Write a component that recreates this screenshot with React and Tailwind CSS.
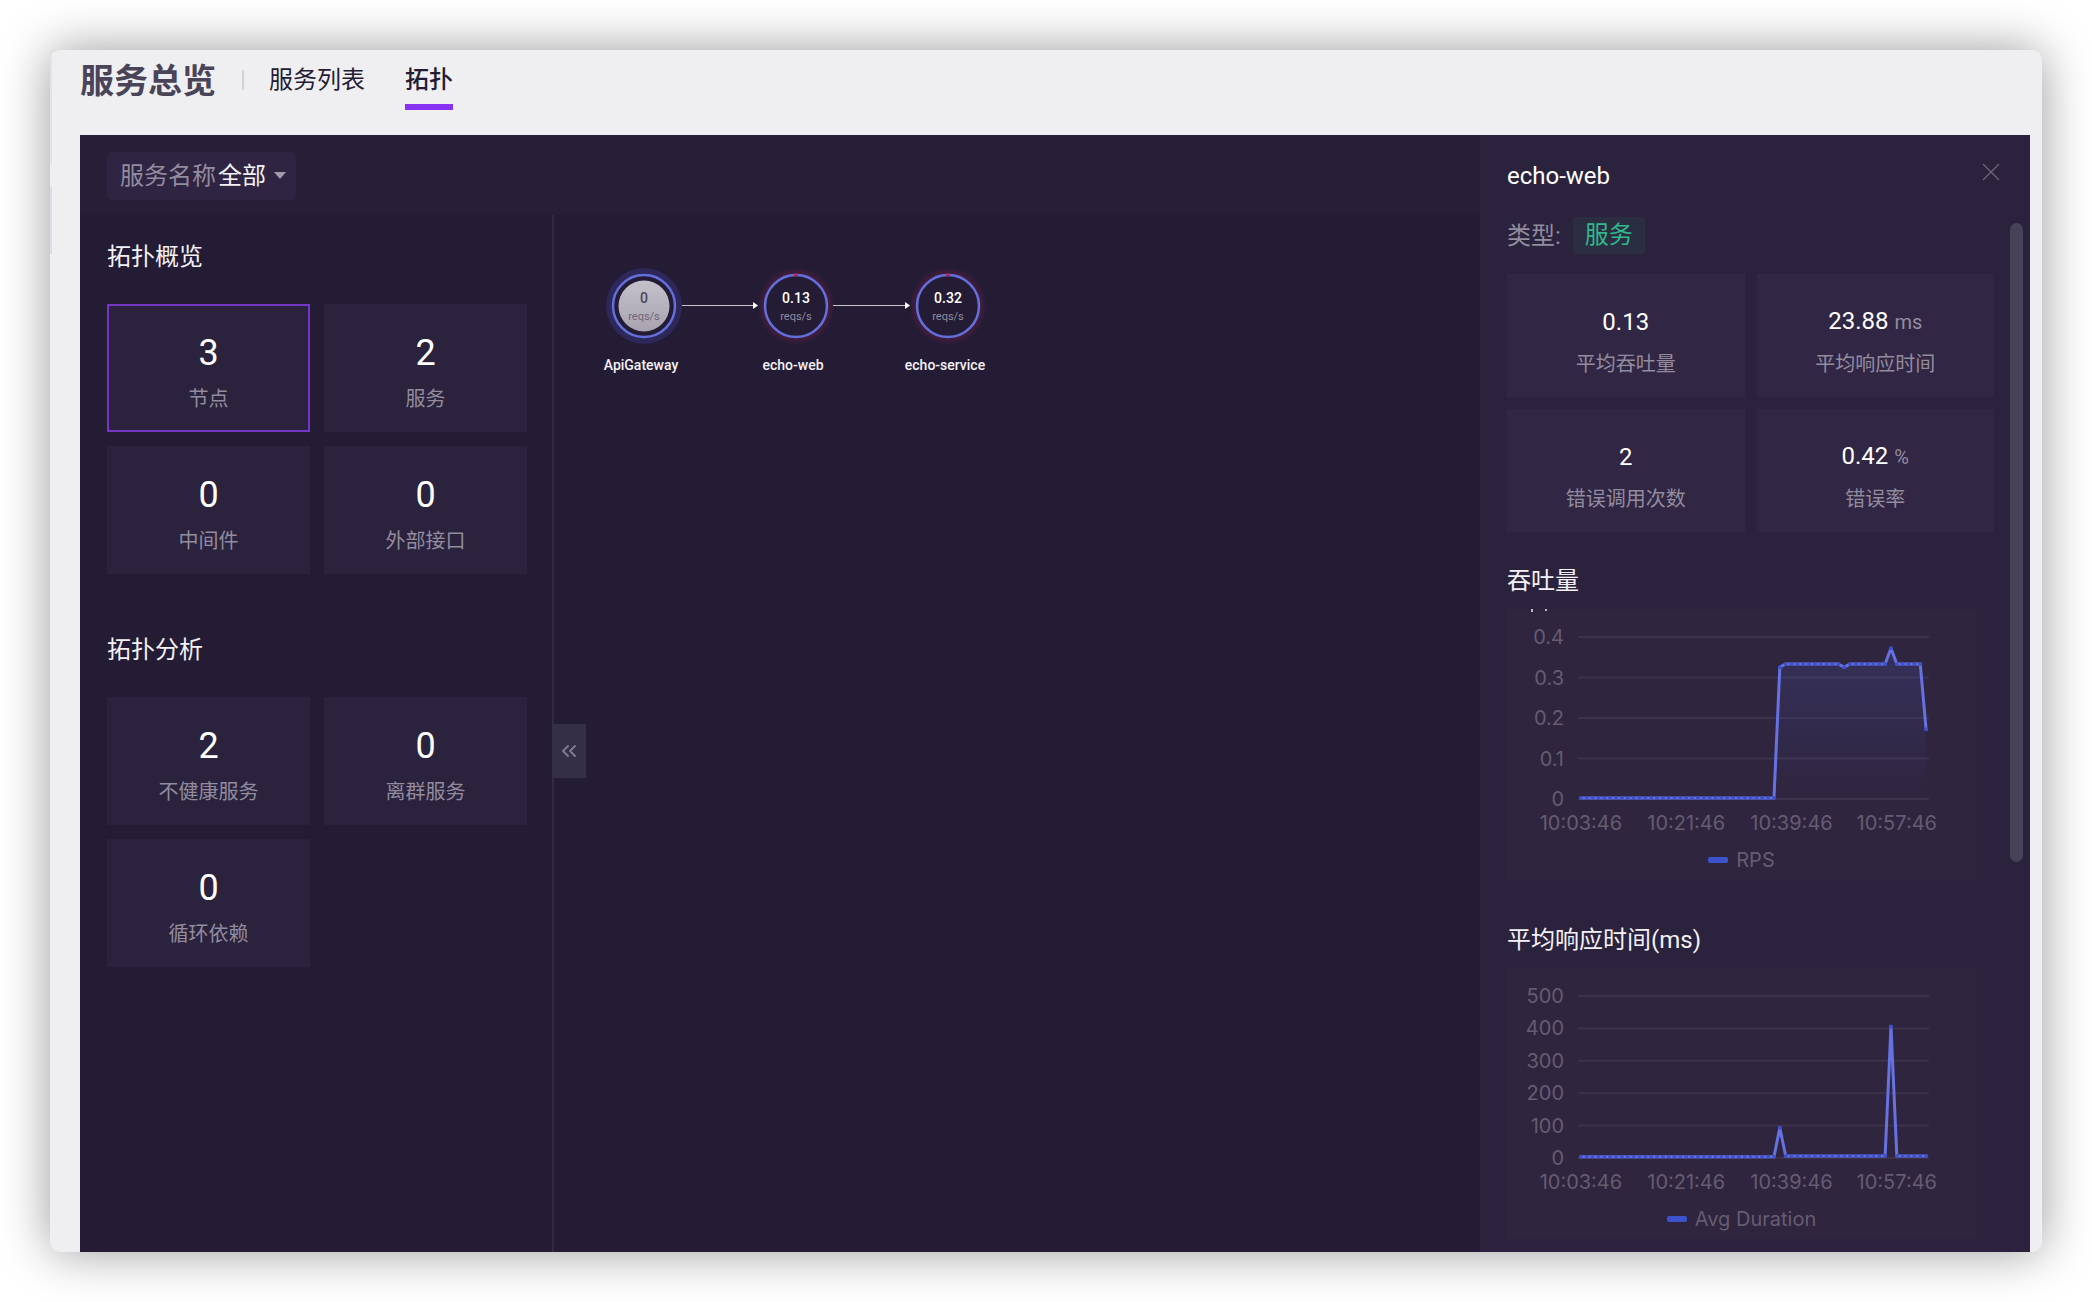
import { ChevronsLeft, X } from 'lucide-react'
import clsx from 'clsx'

const overview = [
  { value: 3, label: '节点', active: true },
  { value: 2, label: '服务' },
  { value: 0, label: '中间件' },
  { value: 0, label: '外部接口' },
]

const analysis = [
  { value: 2, label: '不健康服务' },
  { value: 0, label: '离群服务' },
  { value: 0, label: '循环依赖' },
]

const metrics = [
  { value: '0.13', label: '平均吞吐量' },
  { value: '23.88', unit: 'ms', label: '平均响应时间' },
  { value: '2', label: '错误调用次数' },
  { value: '0.42', unit: '%', label: '错误率' },
]

const timeLabels = ['10:03:46', '10:21:46', '10:39:46', '10:57:46']

// One sample per minute, 60 samples
const rps = Array.from({ length: 60 }, (_, i) => {
  if (i < 34) return 0
  if (i === 34) return 0.323
  if (i === 45) return 0.323
  if (i === 53) return 0.37
  if (i === 59) return 0.17
  return 0.331
})

const duration = Array.from({ length: 60 }, (_, i) => {
  if (i === 34) return 90
  if (i === 53) return 403
  return i < 34 ? 1 : 3
})

function StatGroup({ title, items }) {
  return (
    <section>
      <h2 className="text-2xl leading-8 text-[#f3f1f6]">{title}</h2>
      <div className="mt-[31px] grid grid-cols-2 gap-[14px]">
        {items.map((item) => (
          <button
            key={item.label}
            type="button"
            className={clsx(
              'flex h-32 flex-col items-center justify-center gap-1 border-2 bg-[#2b223d] pt-[14px]',
              item.active ? 'border-[#7434c4]' : 'border-[#2b223d]'
            )}
          >
            <span className="text-4xl leading-[44px] text-white">{item.value}</span>
            <span className="text-xl leading-10 text-[#928c9f]">{item.label}</span>
          </button>
        ))}
      </div>
    </section>
  )
}

function MetricCard({ value, unit, label }) {
  return (
    <div className="flex h-[123px] flex-col items-center justify-center gap-1 bg-[#312643] pt-4">
      <p className="text-2xl leading-9 text-white">
        {value}
        {unit && <span className="ml-[6px] text-xl leading-9 text-[#928c9f]">{unit}</span>}
      </p>
      <p className="text-xl leading-10 text-[#928c9f]">{label}</p>
    </div>
  )
}

function ChartCard({ title, clippedName, ticks, data, legend, filled }) {
  const left = 71
  const right = 422
  const top = 28
  const bottom = 190
  const max = ticks[0]
  const step = (right - left) / data.length
  const px = (i) => left + step * (i + 0.5)
  const py = (v) => bottom - 1 - (v / max) * (bottom - top)
  const points = data.map((v, i) => `${px(i)},${py(v)}`).join(' ')

  return (
    <section>
      <h3 className="text-2xl leading-8 text-[#f3f1f6]">{title}</h3>
      <div className="mt-3 mr-[18px] overflow-hidden bg-[#2f253f]">
        <svg viewBox="0 0 469 231" className="block w-full font-['Inter','Noto_Sans_CJK_SC',sans-serif] text-[20px]">
          <defs>
            <linearGradient id="area" x1="0" y1="0" x2="0" y2="1">
              <stop offset="0" stopColor="#4a55b0" stopOpacity="0.24" />
              <stop offset="1" stopColor="#4a55b0" stopOpacity="0" />
            </linearGradient>
          </defs>
          {/* Tails of the axis name, which runs out over the top edge */}
          {clippedName && <path d="M24 0h2v3h-2zM38 0h2v2h-2z" fill="#bdb8c8" />}
          {ticks.map((tick, i) => {
            const y = top + ((bottom - top) * i) / (ticks.length - 1)
            return (
              <g key={tick}>
                <line x1={left} x2={right} y1={y} y2={y} stroke="#3c334b" strokeWidth="2" />
                <text x="57" y={y + 7} textAnchor="end" fill="#645d71">
                  {tick}
                </text>
              </g>
            )
          })}
          {timeLabels.map((label, i) => (
            <text key={label} x={px(i * 18)} y="221" textAnchor="middle" fill="#645d71">
              {label}
            </text>
          ))}
          {filled && (
            <polygon points={`${px(0)},${bottom} ${points} ${px(59)},${bottom}`} fill="url(#area)" />
          )}
          <polyline
            points={points}
            fill="none"
            stroke="#6672e2"
            strokeWidth="3"
            strokeLinejoin="round"
            strokeLinecap="round"
          />
          {data.map((v, i) => (
            <circle key={i} cx={px(i)} cy={py(v)} r="2" fill="#3f51c8" />
          ))}
        </svg>
        <div className="flex h-10 items-center justify-center gap-2 font-['Inter','Noto_Sans_CJK_SC',sans-serif] text-[20px] text-[#645d71]">
          <span className="h-[6px] w-5 rounded-xs bg-[#3c53cc]" />
          {legend}
        </div>
      </div>
    </section>
  )
}

const nodes = [
  { x: 90, name: 'ApiGateway', rate: '0', selected: true },
  { x: 242, name: 'echo-web', rate: '0.13' },
  { x: 394, name: 'echo-service', rate: '0.32' },
]

function Topology() {
  return (
    <svg
      width="480"
      height="190"
      className="block font-['Roboto','Noto_Sans_CJK_SC',sans-serif]"
      role="img"
      aria-label="拓扑"
    >
      <defs>
        <linearGradient id="disc" x1="0" y1="0" x2="0" y2="1">
          <stop offset="0" stopColor="#c5c1cb" />
          <stop offset="1" stopColor="#a8a3b0" />
        </linearGradient>
        <radialGradient id="alert">
          <stop offset="0.75" stopColor="#8f1f4f" stopOpacity="0.42" />
          <stop offset="1" stopColor="#8f1f4f" stopOpacity="0" />
        </radialGradient>
      </defs>
      {[127, 279].map((x) => (
        <g key={x}>
          <line x1={x} x2={x + 74} y1="90.5" y2="90.5" stroke="#c9c5d0" strokeWidth="1" />
          <path d={`M${x + 72} 87l5 3.5l-5 3.5z`} fill="#fff" />
        </g>
      ))}
      {nodes.map((node) => (
        <g key={node.name} textAnchor="middle">
          {node.selected ? (
            <circle cx={node.x} cy="91" r="38" fill="#2e2759" />
          ) : (
            <circle cx={node.x} cy="91" r="39" fill="url(#alert)" />
          )}
          <circle cx={node.x} cy="91" r="31" fill="#241c35" stroke="#636fdd" strokeWidth="2.5" />
          {node.selected ? (
            <circle cx={node.x} cy="91" r="25.5" fill="url(#disc)" />
          ) : (
            <path d={`M${node.x - 2} 60h4`} stroke="#b02a5c" strokeWidth="2.5" />
          )}
          <text x={node.x} y="88" fontSize="14" fontWeight="500" fill={node.selected ? '#4b4558' : '#fff'}>
            {node.rate}
          </text>
          <text x={node.x} y="105" fontSize="11" fill={node.selected ? '#6d677a' : '#928c9f'}>
            reqs/s
          </text>
          <text x={node.x - 3} y="155" fontSize="14" fontWeight="500" fill="#f3f1f6">
            {node.name}
          </text>
        </g>
      ))}
    </svg>
  )
}

export default function App() {
  return (
    <div className="flex min-h-screen bg-white p-[50px] font-['Roboto','Noto_Sans_CJK_SC',sans-serif]">
      <div className="relative flex flex-1 flex-col overflow-hidden rounded-[10px] bg-[#efeff1] shadow-[0_0_50px_rgba(0,0,0,0.4)]">
        {/* Edge of the main menu */}
        <div className="absolute top-0 left-0 w-[2px]">
          <div className="h-[115px] bg-[#e3e3e5]" />
          <div className="mt-[22px] h-[67px] bg-[#dfdbed]" />
        </div>

        {/* Page header */}
        <header className="flex h-[85px] items-start pl-[30px]">
          <h1 className="mt-[9px] text-[34px] leading-[44px] font-bold text-[#4a4458]">服务总览</h1>
          <span className="mt-5 ml-[26px] h-5 w-[2px] bg-[#d3d2d8]" />
          <nav className="ml-[25px] flex gap-10 text-2xl text-[#241c35]">
            <a href="#list" className="pt-[13px] leading-[34px]">
              服务列表
            </a>
            <a href="#topology" className="border-b-[6px] border-[#8833f2] pt-[13px] pb-[7px] leading-[34px] font-medium">
              拓扑
            </a>
          </nav>
        </header>

        <main className="mr-3 ml-[30px] flex flex-1 bg-[#241c35]">
          <div className="flex flex-1 flex-col">
            {/* Filter bar */}
            <div className="flex h-20 items-start bg-[#281e38] pt-[17px] pl-[27px]">
              <label className="flex h-12 items-center rounded-md bg-[#2f2542] pr-[10px] pl-[13px] text-2xl">
                <span className="text-[#928c9f]">服务名称</span>
                <select className="ml-[2px] appearance-none bg-transparent text-[#f3f1f6] outline-none">
                  <option>全部</option>
                </select>
                <svg width="12" height="8" viewBox="0 0 12 8" className="ml-2">
                  <path d="M0 0h12L6 7z" fill="#a09aac" />
                </svg>
              </label>
            </div>

            <div className="flex flex-1">
              <aside className="flex w-[474px] flex-col gap-[60px] border-r-2 border-[#322a44] pt-[26px] pr-[25px] pl-[27px]">
                <StatGroup title="拓扑概览" items={overview} />
                <StatGroup title="拓扑分析" items={analysis} />
              </aside>
              <div className="relative flex-1">
                <Topology />
                <button
                  type="button"
                  aria-label="收起"
                  className="absolute top-[509px] -left-[2px] flex h-[54px] w-[34px] items-center justify-center bg-[#342e47] text-[#7f798e]"
                >
                  <ChevronsLeft size={24} strokeWidth={2} />
                </button>
              </div>
            </div>
          </div>

          {/* Detail panel */}
          <aside className="flex w-[550px] flex-col bg-[#2b223d] pl-[27px]">
            <div className="flex h-[82px] items-center justify-between pr-6">
              <h2 className="text-2xl text-white">echo-web</h2>
              <button type="button" aria-label="关闭" className="mb-2 text-[#6d677c]">
                <X size={30} strokeWidth={1} />
              </button>
            </div>
            <div className="flex flex-1 gap-4">
              <div className="flex-1">
                <div className="flex h-[37px] items-center gap-3 text-2xl">
                  <span className="text-[#928c9f]">类型:</span>
                  <span className="rounded-sm bg-[#2b2d42] px-3 leading-[37px] text-[#2fb98b]">服务</span>
                </div>
                <div className="mt-5 grid grid-cols-2 gap-3">
                  {metrics.map((m) => (
                    <MetricCard key={m.label} {...m} />
                  ))}
                </div>
                <div className="mt-[33px] flex flex-col gap-11">
                  <ChartCard
                    title="吞吐量"
                    clippedName
                    ticks={[0.4, 0.3, 0.2, 0.1, 0]}
                    data={rps}
                    legend="RPS"
                    filled
                  />
                  <ChartCard
                    title="平均响应时间(ms)"
                    ticks={[500, 400, 300, 200, 100, 0]}
                    data={duration}
                    legend="Avg Duration"
                  />
                </div>
              </div>
              <div className="mt-[6px] mr-[7px] h-[639px] w-[13px] rounded-full bg-[#484259]" />
            </div>
          </aside>
        </main>
      </div>
    </div>
  )
}
